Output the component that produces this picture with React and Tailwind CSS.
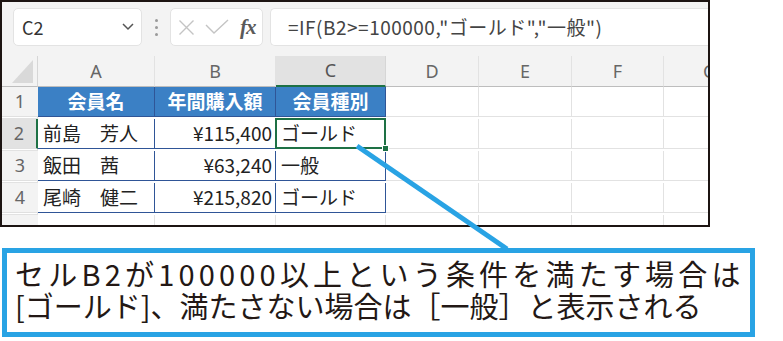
const jp = { fontFamily: '"Noto Sans CJK JP", "Noto Sans", sans-serif' };

const cols = "grid-cols-[36px_117px_121px_110px_93px_93px_92px_92px]";

const rows = [
  ["会員名", "年間購入額", "会員種別"],
  ["前島　芳人", "¥115,400", "ゴールド"],
  ["飯田　茜", "¥63,240", "一般"],
  ["尾崎　健二", "¥215,820", "ゴールド"],
];

function FormulaBar() {
  return (
    <div className="h-[54px] bg-[#f3f3f3] flex items-start pt-[6px] pl-[11px]">
      <div className="w-[129px] h-[38px] rounded-[5px] bg-white border border-[#e3e3e3] flex items-center justify-between pl-[8px] pr-[5px]">
        <span className="text-[18px] text-[#333]" style={jp}>C2</span>
        <svg width="16" height="10" viewBox="0 0 16 10">
          <polyline points="3,2 8,7 13,2" fill="none" stroke="#555" strokeWidth="1.5" />
        </svg>
      </div>
      <div className="w-[28px] h-[38px] flex flex-col items-center justify-center gap-[4px]">
        <span className="w-[3px] h-[3px] rounded-full bg-[#9a9a9a]" />
        <span className="w-[3px] h-[3px] rounded-full bg-[#9a9a9a]" />
        <span className="w-[3px] h-[3px] rounded-full bg-[#9a9a9a]" />
      </div>
      <div className="w-[93px] h-[38px] rounded-[5px] bg-white border border-[#e3e3e3] flex items-center pl-[7px]">
        <svg width="17" height="17" viewBox="0 0 17 17">
          <path d="M1.5 1.5 L15.5 15.5 M15.5 1.5 L1.5 15.5" stroke="#c4c4c4" strokeWidth="1.4" />
        </svg>
        <svg className="ml-[10px]" width="24" height="16" viewBox="0 0 24 16">
          <polyline points="1,6 9,14 23,1" fill="none" stroke="#c4c4c4" strokeWidth="1.4" />
        </svg>
        <span
          className="ml-[11px] text-[21px] italic font-semibold text-[#5a5a5a] leading-none tracking-[-1px]"
          style={{ fontFamily: '"Liberation Serif", serif' }}
        >
          fx
        </span>
      </div>
      <div className="ml-[7px] flex-1 h-[38px] rounded-l-[5px] bg-white border border-r-0 border-[#e3e3e3] flex items-center pl-[17px]">
        <span className="text-[19px] text-[#444] whitespace-nowrap tracking-[0.5px]" style={jp}>
          =IF(B2&gt;=100000,"ゴールド","一般")
        </span>
      </div>
    </div>
  );
}

function ColumnHeaders() {
  const letters = ["A", "B", "C", "D", "E", "F", "G"];
  return (
    <div className={`grid ${cols} h-[31px] bg-[#f3f3f3]`}>
      <div className="border-r border-b border-[#d6d6d6] border-b-[#bdbdbd] flex items-end justify-end pr-[4px] pb-[3px]">
        <svg width="21" height="23" viewBox="0 0 21 23">
          <polygon points="21,0 21,23 0,23" fill="#d9d9d9" />
        </svg>
      </div>
      {letters.map((l) => (
        <div
          key={l}
          className={
            l === "C"
              ? "bg-[#e2e2e2] border-r border-[#d6d6d6] border-b-2 border-b-[#1e7145] flex items-center justify-center text-[18px] text-[#555]"
              : "border-r border-[#e2e2e2] border-b border-b-[#bdbdbd] flex items-center justify-center text-[18px] text-[#666]"
          }
          style={{ fontFamily: '"Noto Sans", sans-serif' }}
        >
          {l}
        </div>
      ))}
    </div>
  );
}

function BodyRow({ n, cells }) {
  const head = n === 1;
  const sel = n === 2;
  return (
    <div className={`grid ${cols} h-[32px]`}>
      <div
        className={
          sel
            ? "bg-[#e2e2e2] border-b border-[#e0e0e0] border-r-2 border-r-[#1e7145] flex items-center justify-center text-[18px] text-[#666]"
            : "bg-[#f3f3f3] border-b border-[#e0e0e0] flex items-center justify-center text-[18px] text-[#666]"
        }
        style={{ fontFamily: '"Noto Sans", sans-serif' }}
      >
        {n}
      </div>
      {cells.map((c, i) => (
        <div
          key={i}
          className={
            (head
              ? "bg-[#3b80c5] text-white font-bold justify-center "
              : "bg-white text-[#222] " + (i === 1 ? "justify-end pr-[3px] " : "pl-[5px] ")) +
            (i === 2 && sel ? "relative z-10 " : "") +
            "flex items-center text-[19px] border-r border-b border-[#2f5597] whitespace-nowrap"
          }
          style={jp}
        >
          {c}
          {i === 2 && sel && (
            <>
              <div className="absolute -top-[1px] -left-[1px] -right-[1px] -bottom-[1px] border-2 border-[#1e7145]" />
              <div className="absolute -right-[4px] -bottom-[4px] w-[7px] h-[7px] bg-[#1e7145] border border-white" />
            </>
          )}
        </div>
      ))}
      {[0, 1, 2, 3, 4].map((k) => (
        <div key={k} className="border-r border-b border-[#e2e2e2]" />
      ))}
    </div>
  );
}

export default function App() {
  return (
    <div className="relative w-[783px] h-[341px] bg-white overflow-hidden">
      <div className="w-[710px] h-[227px] border-2 border-[#1c1412] overflow-hidden bg-white">
        <FormulaBar />
        <ColumnHeaders />
        {rows.map((r, i) => (
          <BodyRow key={i} n={i + 1} cells={r} />
        ))}
        <div className={`grid ${cols} h-[12px]`}>
          <div className="bg-[#f3f3f3]" />
          {[0, 1, 2, 3, 4, 5, 6].map((k) => (
            <div key={k} className="border-r border-[#e2e2e2]" />
          ))}
        </div>
      </div>

      <div
        className="mt-[21px] ml-[2px] w-[753px] h-[89px] border-[5px] border-[#29a3e4] bg-white pl-[8px] pt-[4px] text-[29px] leading-[32px] text-[#231815] whitespace-nowrap"
        style={jp}
      >
        <div className="tracking-[4.2px]">セルB2が100000以上という条件を満たす場合は</div>
        <div>[ゴールド]、満たさない場合は［一般］と表示される</div>
      </div>

      <svg className="absolute top-0 left-0 pointer-events-none z-20" width="783" height="341">
        <line x1="357" y1="146" x2="507" y2="249" stroke="#29a3e4" strokeWidth="5" />
      </svg>
    </div>
  );
}
